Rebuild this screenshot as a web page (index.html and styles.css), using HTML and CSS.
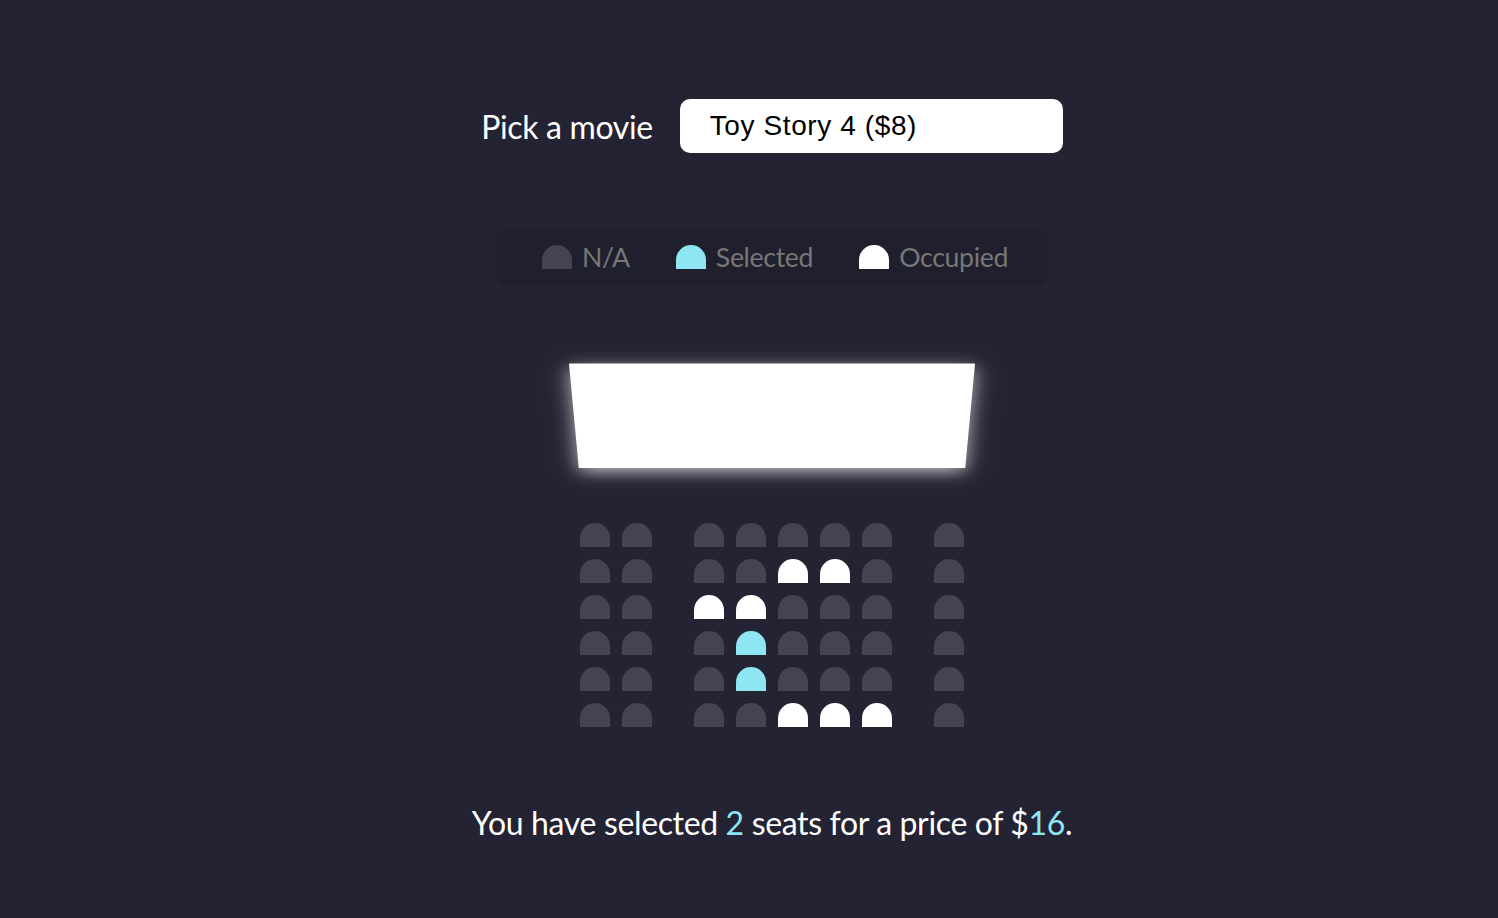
FILE: index.html
```html
<!DOCTYPE html>
<html lang="en">
<head>
<meta charset="UTF-8">
<title>Movie Seat Booking</title>
<link rel="stylesheet" href="styles.css">
</head>
<body>
  <div class="movie-container">
    <label class="movie-label">Pick a movie</label>
    <div class="select">Toy Story 4 ($8)</div>
  </div>

  <ul class="showcase">
    <li><div class="seat"></div><small>N/A</small></li>
    <li><div class="seat selected"></div><small>Selected</small></li>
    <li><div class="seat occupied"></div><small>Occupied</small></li>
  </ul>

  <div class="container">
    <div class="screen"></div>
    <div class="row">
      <div class="seat"></div><div class="seat"></div><div class="seat"></div><div class="seat"></div><div class="seat"></div><div class="seat"></div><div class="seat"></div><div class="seat"></div>
    </div>
    <div class="row">
      <div class="seat"></div><div class="seat"></div><div class="seat"></div><div class="seat"></div><div class="seat occupied"></div><div class="seat occupied"></div><div class="seat"></div><div class="seat"></div>
    </div>
    <div class="row">
      <div class="seat"></div><div class="seat"></div><div class="seat occupied"></div><div class="seat occupied"></div><div class="seat"></div><div class="seat"></div><div class="seat"></div><div class="seat"></div>
    </div>
    <div class="row">
      <div class="seat"></div><div class="seat"></div><div class="seat"></div><div class="seat selected"></div><div class="seat"></div><div class="seat"></div><div class="seat"></div><div class="seat"></div>
    </div>
    <div class="row">
      <div class="seat"></div><div class="seat"></div><div class="seat"></div><div class="seat selected"></div><div class="seat"></div><div class="seat"></div><div class="seat"></div><div class="seat"></div>
    </div>
    <div class="row">
      <div class="seat"></div><div class="seat"></div><div class="seat"></div><div class="seat"></div><div class="seat occupied"></div><div class="seat occupied"></div><div class="seat occupied"></div><div class="seat"></div>
    </div>
  </div>

  <p class="text">You have selected <span>2</span> seats for a price of $<span>16</span>.</p>
</body>
</html>
```

FILE: styles.css
```css
* {
  box-sizing: border-box;
}

body {
  background-color: #242333;
  color: #fff;
  display: flex;
  flex-direction: column;
  align-items: center;
  justify-content: flex-start;
  height: 100vh;
  font-family: Lato, "Noto Sans", sans-serif;
  font-size: 32px;
  letter-spacing: -0.35px;
  margin: 0;
  padding: 59px 0 0 46px;
}

.movie-container {
  margin: 40px 0 44px;
  display: flex;
  align-items: center;
}

.movie-label {
  font-size: 32px;
}

.select {
  background-color: #fff;
  color: #000;
  border-radius: 10px;
  font-family: "Liberation Sans", Arial, sans-serif;
  font-size: 28px;
  letter-spacing: 0.6px;
  margin-left: 27px;
  padding: 0 30px;
  width: 383px;
  height: 54px;
  display: flex;
  align-items: center;
}

.showcase {
  background: rgba(0, 0, 0, 0.1);
  padding: 10px 20px;
  border-radius: 10px;
  color: #777;
  list-style-type: none;
  display: flex;
  justify-content: space-between;
  margin: 32px 0;
  height: 56px;
}

.showcase li {
  display: flex;
  align-items: center;
  justify-content: center;
  margin: 0 20px;
}

.showcase li small {
  font-size: 26.7px;
  margin-left: 4px;
}

.seat {
  background-color: #444451;
  height: 24px;
  width: 30px;
  margin: 6px;
  border-top-left-radius: 20px;
  border-top-right-radius: 20px;
}

.seat.selected {
  background-color: #8ee6f3;
}

.seat.occupied {
  background-color: #fff;
}

.row .seat:nth-of-type(2) {
  margin-right: 36px;
}

.row .seat:last-of-type {
  margin-left: 36px;
}

.container {
  perspective: 2000px;
  margin-bottom: 60px;
}

.row {
  display: flex;
}

.screen {
  background-color: #fff;
  height: 140px;
  width: 100%;
  margin: 30px 0;
  transform: rotateX(-45deg);
  box-shadow: 0 6px 20px rgba(255, 255, 255, 0.7);
}

.text {
  margin: 10px 0;
  font-size: 32px;
}

.text span {
  color: #8ee6f3;
}
```
